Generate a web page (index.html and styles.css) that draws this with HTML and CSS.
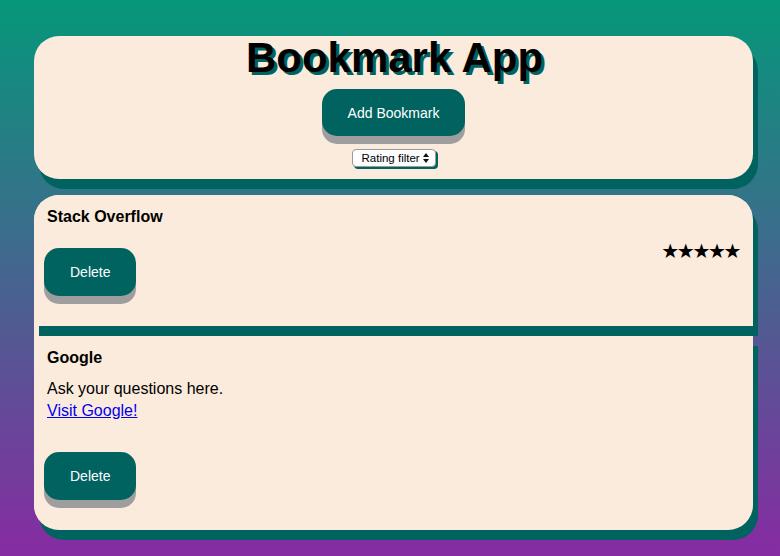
FILE: index.html
```html
<!DOCTYPE html>
<html lang="en">
<head>
<meta charset="utf-8">
<title>Bookmark App</title>
<link rel="stylesheet" href="styles.css">
</head>
<body>
<main class="app">
  <header class="panel header">
    <h1 class="title">Bookmark App</h1>
    <button class="btn add-btn" type="button">Add Bookmark</button>
    <div class="select-wrap">
      <select class="rating-select">
        <option>Rating filter</option>
        <option>1+</option>
        <option>2+</option>
        <option>3+</option>
        <option>4+</option>
        <option>5</option>
      </select>
    </div>
  </header>
  <ul class="bookmarks">
    <li class="bookmark first">
      <h3 class="bm-title">Stack Overflow</h3>
      <div class="bm-row">
        <button class="btn delete-btn" type="button">Delete</button>
        <span class="stars">★★★★★</span>
      </div>
    </li>
    <li class="bookmark last">
      <h3 class="bm-title">Google</h3>
      <p class="bm-desc">Ask your questions here.<br><a href="#" class="bm-link">Visit Google!</a></p>
      <div class="bm-row">
        <button class="btn delete-btn" type="button">Delete</button>
      </div>
    </li>
  </ul>
</main>
</body>
</html>
```

FILE: styles.css
```css
html {
  min-height: 100%;
  background: linear-gradient(to bottom, #05977a 0%, #3f6a8d 45%, #872ba2 100%);
}
body {
  margin: 0;
  font-family: "Liberation Sans", Arial, Helvetica, sans-serif;
  color: #000;
}
.app {
  width: 719px;
  padding: 36px 0 17px 34px;
}
.panel {
  background: #fbebdc;
  border-radius: 25px;
  box-shadow: 5px 10px 0 #00635f;
}
.header {
  display: flex;
  flex-direction: column;
  align-items: center;
  padding: 0 0 12px;
}
.title {
  margin: 0;
  font-size: 42px;
  line-height: 44px;
  font-weight: bold;
  text-shadow: 3px 3px 0 #00635f;
  transform: translateX(1px);
}
.btn {
  font-family: "Liberation Sans", Arial, Helvetica, sans-serif;
  font-size: 14px;
  line-height: 16px;
  color: #fff;
  background: #00635f;
  border: 0;
  border-radius: 15px;
  box-shadow: 0 8px 0 #9e9e9e;
  padding: 0 26px;
  cursor: pointer;
}
.add-btn {
  margin-top: 9px;
  height: 47px;
}
.select-wrap {
  position: relative;
  margin-top: 13px;
}
.select-wrap::before,
.select-wrap::after {
  content: "";
  position: absolute;
  right: 7px;
  width: 0;
  height: 0;
  border-left: 3px solid transparent;
  border-right: 3px solid transparent;
  pointer-events: none;
}
.select-wrap::before {
  top: 4px;
  border-bottom: 4px solid #111;
}
.select-wrap::after {
  top: 10px;
  border-top: 4px solid #111;
}
.rating-select {
  appearance: none;
  -webkit-appearance: none;
  box-sizing: border-box;
  font-family: "Liberation Sans", Arial, Helvetica, sans-serif;
  font-size: 11.5px;
  line-height: 14px;
  height: 18px;
  width: 84px;
  padding: 0 14px 0 9px;
  background: #fdfdfd;
  border: 1px solid #9a9a9a;
  border-radius: 4px;
  box-shadow: 2px 2px 0 #00635f;
  color: #000;
  display: block;
}
.bookmarks {
  list-style: none;
  margin: 16px 0 0;
  padding: 0;
  background: #fbebdc;
  border-radius: 25px;
}
.bookmark {
  background: #fbebdc;
  box-shadow: 5px 10px 0 #00635f;
  padding: 13px 13px 30px 10px;
}
.bookmark.first {
  border-radius: 25px 25px 0 0;
}
.bookmark.last {
  margin-top: 10px;
  border-radius: 0 0 25px 25px;
}
.bm-title {
  margin: 0;
  padding-left: 3px;
  font-size: 16px;
  line-height: 18px;
  font-weight: bold;
}
.bm-row {
  display: flex;
  justify-content: space-between;
  align-items: flex-start;
}
.first .bm-row {
  margin-top: 22px;
}
.delete-btn {
  height: 48px;
}
.stars {
  font-family: "DejaVu Sans", sans-serif;
  font-size: 20px;
  line-height: 21px;
  margin-top: -7px;
  letter-spacing: -2.4px;
  margin-right: 1px;
}
.bm-desc {
  margin: 11px 0 0;
  padding-left: 3px;
  font-size: 16px;
  line-height: 22px;
}
.bm-link {
  color: #0000ee;
  text-decoration: underline;
}
.last .bm-row {
  margin-top: 30px;
}
```
